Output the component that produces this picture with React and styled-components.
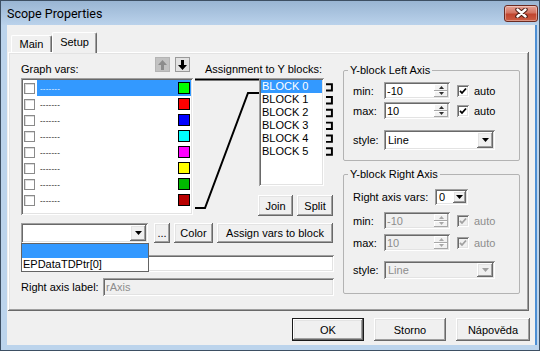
import React from 'react';
import styled, { createGlobalStyle, css } from 'styled-components';

const GlobalStyle = createGlobalStyle`
  html, body {
    margin: 0;
    padding: 0;
    background: #bcd4ec;
  }
  body {
    font-family: "Liberation Sans", Arial, sans-serif;
    font-size: 11px;
    color: #000;
  }
  * {
    box-sizing: border-box;
  }
`;

// classic 3D bevels
const raised = css`
  background: #f0f0f0;
  box-shadow: inset -1px -1px #696969, inset 1px 1px #ffffff, inset -2px -2px #a0a0a0, inset 2px 2px #e3e3e3;
`;

const sunken = css`
  box-shadow: inset 1px 1px #a0a0a0, inset -1px -1px #ffffff, inset 2px 2px #696969, inset -2px -2px #e3e3e3;
`;

const Window = styled.div`
  width: 540px;
  height: 351px;
  display: flex;
  flex-direction: column;
  background: #bcd4ec;
  border: 1px solid #3d4f63;
`;

const TitleBar = styled.div`
  height: 24px;
  flex: none;
  display: flex;
  align-items: center;
  justify-content: space-between;
  padding: 0 1px 0 6px;
  background: linear-gradient(#99b5d3, #bad2eb);
`;

const TitleText = styled.span`
  font-family: Roboto, "Liberation Sans", sans-serif;
  font-size: 12.5px;
  color: #000;
`;

const CloseBtn = styled.div`
  width: 34px;
  height: 17px;
  border: 1px solid #6b2b22;
  border-radius: 3px;
  background: linear-gradient(#e6a395, #d37462 45%, #c0452f 55%, #cc5d44);
  box-shadow: inset 0 0 0 1px rgba(255, 255, 255, 0.35);
  display: flex;
  align-items: center;
  justify-content: center;
`;

const Body = styled.div`
  flex: 1;
  display: flex;
  padding: 0 4px 5px 6px;
`;

const Client = styled.div`
  width: 528px;
  height: 320px;
  background: #f0f0f0;
  display: flex;
  flex-direction: column;
  box-shadow: 2px 0 0 #4d8fd4;
`;

const TabStrip = styled.div`
  height: 27px;
  flex: none;
  display: flex;
  align-items: flex-end;
  padding: 0 0 0 4px;
  position: relative;
  z-index: 1;
`;

const Tab = styled.div`
  width: ${(p) => p.$w}px;
  height: ${(p) => (p.$active ? 21 : 17)}px;
  margin-bottom: ${(p) => (p.$active ? -1 : 0)}px;
  padding-bottom: ${(p) => (p.$active ? 2 : 0)}px;
  display: flex;
  align-items: center;
  justify-content: center;
  background: #f0f0f0;
  border-top: 1px solid #fff;
  border-left: 1px solid #fff;
  border-right: 1px solid #696969;
  box-shadow: inset -1px 0 #a0a0a0;
  border-radius: 2px 2px 0 0;
`;

const Panel = styled.div`
  width: 521px;
  height: 259px;
  margin-left: 1px;
  flex: none;
  ${raised};
  padding: 5px 0 0 13px;
  display: flex;
  gap: 9px;
  align-items: flex-start;
`;

const LeftCol = styled.div`
  width: 313px;
  display: flex;
  flex-direction: column;
`;

const HeaderRow = styled.div`
  height: 21px;
  display: flex;
`;

const GraphHeader = styled.div`
  width: 172px;
  display: flex;
  justify-content: space-between;
  padding-right: 3px;
`;

const Caption = styled.span`
  padding-top: 6px;
  line-height: 13px;
  margin-left: ${(p) => p.$ml || 0}px;
  white-space: nowrap;
`;

const ArrowGroup = styled.div`
  display: flex;
  gap: 5px;
`;

const ArrowBtn = styled.div`
  width: 15px;
  height: 15px;
  display: flex;
  align-items: center;
  justify-content: center;
  background: ${(p) => (p.$disabled ? '#c2c2c2' : '#e2e2e2')};
  border: 1px solid ${(p) => (p.$disabled ? '#b4b4b4' : '#9a9a9a')};
`;

const ListRow = styled.div`
  display: flex;
  height: 137px;
`;

const VarList = styled.div`
  width: 172px;
  height: 137px;
  background: #fff;
  ${sunken};
  padding: 2px;
`;

const VarRow = styled.div`
  height: 16px;
  display: flex;
  align-items: center;
  padding-left: 1px;
`;

const VarCheck = styled.span`
  width: 11px;
  height: 11px;
  flex: none;
  background: #fff;
  border: 1px solid #8a8a8a;
  box-shadow: inset 1px 1px #dcdcdc;
`;

const VarItem = styled.div`
  flex: 1;
  height: 16px;
  margin-left: 2px;
  display: flex;
  align-items: center;
  justify-content: space-between;
  padding: 0 1px 0 3px;
  background: ${(p) => (p.$sel ? '#3399ff' : 'transparent')};
  color: ${(p) => (p.$sel ? '#fff' : '#000')};
`;

const Dashes = styled.span`
  font-size: 8px;
  letter-spacing: 0.2px;
  line-height: 13px;
`;

const Swatch = styled.span`
  width: 12px;
  height: 12px;
  border: 1px solid #000;
  background: ${(p) => p.$c};
`;

const Connector = styled.svg`
  width: 66px;
  height: 137px;
  flex: none;
`;

const BlockCol = styled.div`
  width: 75px;
  display: flex;
  flex-direction: column;
`;

const BlockRow = styled.div`
  display: flex;
`;

const BlockList = styled.div`
  width: 66px;
  height: 108px;
  background: #fff;
  ${sunken};
  padding: 2px;
`;

const BlockItem = styled.div`
  height: 13px;
  line-height: 13px;
  padding-left: 1px;
  background: ${(p) => (p.$sel ? '#3399ff' : 'transparent')};
  color: ${(p) => (p.$sel ? '#fff' : '#000')};
  white-space: nowrap;
`;

const Brackets = styled.svg`
  width: 8px;
  height: 108px;
  margin-left: 2px;
`;

const JoinRow = styled.div`
  display: flex;
  gap: 4px;
  margin: 9px 0 0 -1px;
`;

const Button = styled.div`
  width: ${(p) => p.$w}px;
  height: ${(p) => p.$h || 21}px;
  flex: none;
  margin-left: ${(p) => p.$ml || 0}px;
  ${raised};
  display: flex;
  align-items: center;
  justify-content: center;
  white-space: nowrap;
  ${(p) =>
    p.$default &&
    css`
      border: 1px solid #1a1a1a;
    `}
`;

const ToolRow = styled.div`
  display: flex;
  margin-top: 8px;
  position: relative;
  z-index: 3;
`;

const Combo = styled.div`
  width: ${(p) => p.$w}px;
  height: ${(p) => p.$h}px;
  flex: none;
  background: ${(p) => (p.$disabled ? '#f0f0f0' : '#fff')};
  color: ${(p) => (p.$disabled ? '#8d8d8d' : '#000')};
  ${sunken};
  padding: 2px;
  display: flex;
`;

const ComboText = styled.span`
  flex: 1;
  display: flex;
  align-items: center;
  padding-left: 2px;
  overflow: hidden;
`;

const DropBtn = styled.span`
  width: ${(p) => p.$w || 16}px;
  flex: none;
  ${raised};
  display: flex;
  align-items: center;
  justify-content: center;
`;

const Popup = styled.div`
  position: absolute;
  left: 0;
  top: 20px;
  width: 128px;
  background: #fff;
  border: 1px solid #646464;
`;

const PopupItem = styled.div`
  height: ${(p) => p.$h}px;
  line-height: ${(p) => p.$h}px;
  padding-left: 1px;
  background: ${(p) => (p.$sel ? '#3399ff' : 'transparent')};
`;

const FieldRow = styled.div`
  display: flex;
  align-items: center;
  margin-top: ${(p) => p.$mt}px;
`;

const FieldLabel = styled.span`
  width: ${(p) => p.$w}px;
  flex: none;
  white-space: nowrap;
`;

const TextField = styled.div`
  width: ${(p) => p.$w}px;
  height: ${(p) => p.$h}px;
  background: ${(p) => (p.$disabled ? '#f0f0f0' : '#fff')};
  color: ${(p) => (p.$disabled ? '#8d8d8d' : '#000')};
  ${sunken};
  padding: 0 3px;
  display: flex;
  align-items: center;
`;

const RightCol = styled.div`
  width: 177px;
  margin-top: 7px;
  display: flex;
  flex-direction: column;
  gap: 7px;
`;

const Group = styled.fieldset`
  margin: 0;
  min-width: 0;
  width: 177px;
  padding: ${(p) => p.$pt}px 0 ${(p) => p.$pb}px 9px;
  border: 1px solid #b3b3b3;
  border-radius: 2px;
`;

const Legend = styled.legend`
  padding: 0 2px;
  margin-left: -5px;
  line-height: 12px;
`;

const AxisRow = styled.div`
  display: flex;
  align-items: center;
  margin-top: ${(p) => p.$mt || 0}px;
`;

const AxisLabel = styled.span`
  width: ${(p) => p.$w || 31}px;
  flex: none;
  white-space: nowrap;
`;

const SpinBox = styled.div`
  width: 66px;
  height: 17px;
  flex: none;
  background: ${(p) => (p.$disabled ? '#f0f0f0' : '#fff')};
  color: ${(p) => (p.$disabled ? '#8d8d8d' : '#000')};
  ${sunken};
  padding: 2px;
  display: flex;
`;

const SpinText = styled.span`
  flex: 1;
  display: flex;
  align-items: center;
  padding-left: 1px;
`;

const SpinButtons = styled.span`
  width: 14px;
  display: flex;
  flex-direction: column;
`;

const SpinHalf = styled.span`
  flex: 1;
  background: #f2f2f2;
  box-shadow: inset -1px -1px #a8a8a8, inset 1px 1px #ffffff;
  display: flex;
  align-items: center;
  justify-content: center;
`;

const CheckBox = styled.span`
  width: 12px;
  height: 12px;
  flex: none;
  margin-left: 7px;
  background: ${(p) => (p.$disabled ? '#f0f0f0' : '#fff')};
  ${sunken};
  display: flex;
  align-items: center;
  justify-content: center;
`;

const CheckText = styled.span`
  margin-left: 5px;
  color: ${(p) => (p.$disabled ? '#8d8d8d' : '#000')};
`;

const Footer = styled.div`
  display: flex;
  justify-content: flex-end;
  gap: 10px;
  padding-right: 5px;
  margin-top: 7px;
`;

const UpArrow = ({ color }) => (
  <svg width="9" height="10" viewBox="0 0 9 10">
    <polygon points="4.5,0 9,5 6,5 6,10 3,10 3,5 0,5" fill={color} />
  </svg>
);

const DownArrow = ({ color }) => (
  <svg width="9" height="10" viewBox="0 0 9 10">
    <polygon points="4.5,10 9,5 6,5 6,0 3,0 3,5 0,5" fill={color} />
  </svg>
);

const Triangle = ({ color = '#000', w = 7, h = 4, up }) => (
  <svg width={w} height={h} viewBox={`0 0 ${w} ${h}`}>
    <polygon points={up ? `0,${h} ${w},${h} ${w / 2},0` : `0,0 ${w},0 ${w / 2},${h}`} fill={color} />
  </svg>
);

const CheckMark = ({ color }) => (
  <svg width="8" height="8" viewBox="0 0 8 8">
    <path d="M1 3.8 L3 6 L7 1.5" stroke={color} strokeWidth="1.8" fill="none" />
  </svg>
);

function Spin({ value, disabled }) {
  const arrow = disabled ? '#a8a8a8' : '#303030';
  return (
    <SpinBox $disabled={disabled}>
      <SpinText>{value}</SpinText>
      <SpinButtons>
        <SpinHalf><Triangle w={5} h={3} up color={arrow} /></SpinHalf>
        <SpinHalf><Triangle w={5} h={3} color={arrow} /></SpinHalf>
      </SpinButtons>
    </SpinBox>
  );
}

function AutoCheck({ disabled }) {
  return (
    <>
      <CheckBox $disabled={disabled}>
        <CheckMark color={disabled ? '#a0a0a0' : '#000'} />
      </CheckBox>
      <CheckText $disabled={disabled}>auto</CheckText>
    </>
  );
}

const varColors = ['#00ff00', '#ff0000', '#0000ff', '#00ffff', '#ff00ff', '#ffff00', '#00b800', '#b80000'];
const blocks = ['BLOCK 0', 'BLOCK 1', 'BLOCK 2', 'BLOCK 3', 'BLOCK 4', 'BLOCK 5'];

export default function App() {
  return (
    <>
      <GlobalStyle />
      <Window>
        <TitleBar>
          <TitleText>Scope Properties</TitleText>
          <CloseBtn>
            <svg width="13" height="10" viewBox="0 0 13 10">
              <path d="M2.5 1.5 L10.5 8.5 M10.5 1.5 L2.5 8.5" stroke="#4a1a12" strokeWidth="4.4" strokeLinecap="round" />
              <path d="M2.5 1.5 L10.5 8.5 M10.5 1.5 L2.5 8.5" stroke="#ffffff" strokeWidth="2.4" strokeLinecap="round" />
            </svg>
          </CloseBtn>
        </TitleBar>
        <Body>
          <Client>
            <TabStrip>
              <Tab $w={41}>Main</Tab>
              <Tab $w={45} $active>Setup</Tab>
            </TabStrip>
            <Panel>
              <LeftCol>
                <HeaderRow>
                  <GraphHeader>
                    <Caption>Graph vars:</Caption>
                    <ArrowGroup>
                      <ArrowBtn $disabled><UpArrow color="#8c8c8c" /></ArrowBtn>
                      <ArrowBtn><DownArrow color="#000" /></ArrowBtn>
                    </ArrowGroup>
                  </GraphHeader>
                  <Caption $ml={12}>Assignment to Y blocks:</Caption>
                </HeaderRow>
                <ListRow>
                  <VarList>
                    {varColors.map((c, i) => (
                      <VarRow key={c}>
                        <VarCheck />
                        <VarItem $sel={i === 0}>
                          <Dashes>-------</Dashes>
                          <Swatch $c={c} />
                        </VarItem>
                      </VarRow>
                    ))}
                  </VarList>
                  <Connector viewBox="0 0 66 137">
                    <path d="M2 1.5 H66" stroke="#000" strokeWidth="2" fill="none" />
                    <path d="M2 130 H12 L55 15 H66" stroke="#000" strokeWidth="2" fill="none" />
                  </Connector>
                  <BlockCol>
                    <BlockRow>
                      <BlockList>
                        {blocks.map((b, i) => (
                          <BlockItem key={b} $sel={i === 0}>{b}</BlockItem>
                        ))}
                      </BlockList>
                      <Brackets viewBox="0 0 8 108">
                        {blocks.map((b, i) => (
                          <path
                            key={b}
                            d={`M0 ${5.5 + 13 * i} H6 V${12 + 13 * i} H0`}
                            stroke="#000"
                            strokeWidth="2"
                            fill="none"
                          />
                        ))}
                      </Brackets>
                    </BlockRow>
                    <JoinRow>
                      <Button $w={35}>Join</Button>
                      <Button $w={36}>Split</Button>
                    </JoinRow>
                  </BlockCol>
                </ListRow>
                <ToolRow>
                  <Combo $w={127} $h={20}>
                    <ComboText />
                    <DropBtn><Triangle /></DropBtn>
                  </Combo>
                  <Button $w={16} $h={20} $ml={6}>...</Button>
                  <Button $w={39} $h={20} $ml={4}>Color</Button>
                  <Button $w={116} $h={20} $ml={4}>Assign vars to block</Button>
                  <Popup>
                    <PopupItem $h={14} $sel />
                    <PopupItem $h={13}>EPDataTDPtr[0]</PopupItem>
                  </Popup>
                </ToolRow>
                <FieldRow $mt={12}>
                  {/* label of this row is hidden under the open drop-down */}
                  <FieldLabel $w={81} />
                  <TextField $w={232} $h={17} />
                </FieldRow>
                <FieldRow $mt={6}>
                  <FieldLabel $w={82}>Right axis label:</FieldLabel>
                  <TextField $w={231} $h={18} $disabled>rAxis</TextField>
                </FieldRow>
              </LeftCol>
              <RightCol>
                <Group $pt={6} $pb={10}>
                  <Legend>Y-block Left Axis</Legend>
                  <AxisRow>
                    <AxisLabel>min:</AxisLabel>
                    <Spin value="-10" />
                    <AutoCheck />
                  </AxisRow>
                  <AxisRow $mt={3}>
                    <AxisLabel>max:</AxisLabel>
                    <Spin value="10" />
                    <AutoCheck />
                  </AxisRow>
                  <AxisRow $mt={11}>
                    <AxisLabel>style:</AxisLabel>
                    <Combo $w={111} $h={20}>
                      <ComboText>Line</ComboText>
                      <DropBtn><Triangle /></DropBtn>
                    </Combo>
                  </AxisRow>
                </Group>
                <Group $pt={9} $pb={14}>
                  <Legend>Y-block Right Axis</Legend>
                  <AxisRow>
                    <AxisLabel $w={82}>Right axis vars:</AxisLabel>
                    <Combo $w={33} $h={16}>
                      <ComboText>0</ComboText>
                      <DropBtn $w={13}><Triangle /></DropBtn>
                    </Combo>
                  </AxisRow>
                  <AxisRow $mt={7}>
                    <AxisLabel>min:</AxisLabel>
                    <Spin value="-10" disabled />
                    <AutoCheck disabled />
                  </AxisRow>
                  <AxisRow $mt={5}>
                    <AxisLabel>max:</AxisLabel>
                    <Spin value="10" disabled />
                    <AutoCheck disabled />
                  </AxisRow>
                  <AxisRow $mt={10}>
                    <AxisLabel>style:</AxisLabel>
                    <Combo $w={111} $h={18} $disabled>
                      <ComboText>Line</ComboText>
                      <DropBtn><Triangle color="#a0a0a0" /></DropBtn>
                    </Combo>
                  </AxisRow>
                </Group>
              </RightCol>
            </Panel>
            <Footer>
              <Button $w={72} $h={23} $default>OK</Button>
              <Button $w={72} $h={23}>Storno</Button>
              <Button $w={74} $h={23}>Nápověda</Button>
            </Footer>
          </Client>
        </Body>
      </Window>
    </>
  );
}
